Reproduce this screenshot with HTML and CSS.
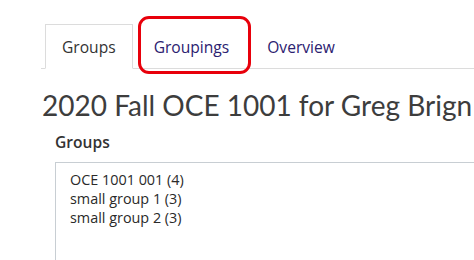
FILE: index.html
```html
<!DOCTYPE html>
<html lang="en">
<head>
    <meta charset="UTF-8">
    <title>Groups</title>
    <link rel="stylesheet" href="styles.css">
</head>
<body>
    <div class="page">
        <ul class="tabs">
            <li class="tab active">Groups</li>
            <li class="tab">Groupings<span class="callout"></span></li>
            <li class="tab">Overview</li>
        </ul>
        <h1 class="course-title">2020 Fall OCE 1001 for Greg Brign</h1>
        <div class="group-panel">
            <h3>Groups</h3>
            <div class="group-list">
                <div class="group-item">OCE 1001 001 (4)</div>
                <div class="group-item">small group 1 (3)</div>
                <div class="group-item">small group 2 (3)</div>
            </div>
        </div>
    </div>
</body>
</html>
```

FILE: styles.css
```css
body {
    margin: 0;
    background: #fff;
    font-family: 'Open Sans', 'Noto Sans', sans-serif;
    overflow: hidden;
}

.page {
    padding: 24px 0 0 41px;
    white-space: nowrap;
}

.tabs {
    list-style: none;
    margin: 0;
    padding: 0 0 0 4px;
    display: flex;
    border-bottom: 1px solid #dcdcdc;
}

.tab {
    position: relative;
    padding: 11px 16px 10px 16px;
    margin-right: 4px;
    margin-bottom: -1px;
    font-size: 15.6px;
    line-height: 22px;
    color: #2b2170;
    border: 1px solid transparent;
}

.tab.active {
    color: #333;
    background: #fff;
    border-color: #dcdcdc #dcdcdc #fff #dcdcdc;
}

.callout {
    position: absolute;
    top: -9px;
    left: 0;
    right: -6px;
    bottom: -6px;
    border: 3px solid #e8000b;
    border-radius: 11px;
}

.course-title {
    margin: 19px 0 0 1px;
    font-family: Lato, sans-serif;
    font-weight: 400;
    font-size: 28px;
    line-height: 34px;
    color: #3d3d3d;
}

.group-panel {
    margin: 10px 0 0 14px;
}

.group-panel h3 {
    margin: 0 0 10px 0;
    font-size: 15.6px;
    font-weight: 600;
    line-height: 20px;
    color: #333;
}

.group-list {
    border: 1px solid #c8ced3;
    padding: 7px 14px 40px 14px;
    min-width: 500px;
}

.group-item {
    font-size: 14.4px;
    line-height: 19px;
    color: #2a2a2a;
}
```
